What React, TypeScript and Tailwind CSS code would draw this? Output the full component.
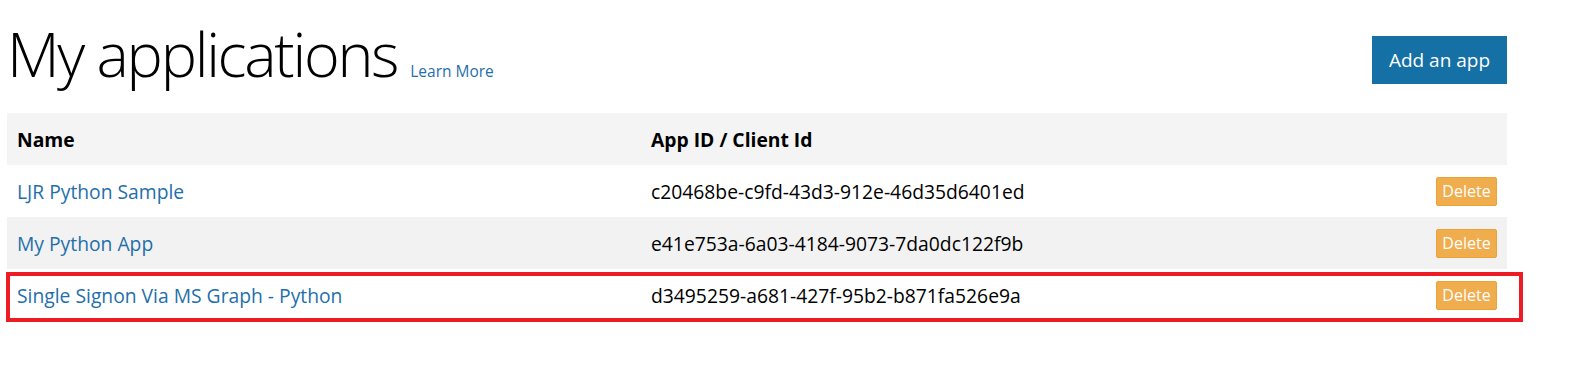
import React from 'react';

const apps = [
  { name: 'LJR Python Sample', id: 'c20468be-c9fd-43d3-912e-46d35d6401ed' },
  { name: 'My Python App', id: 'e41e753a-6a03-4184-9073-7da0dc122f9b' },
  { name: 'Single Signon Via MS Graph - Python', id: 'd3495259-a681-427f-95b2-b871fa526e9a' },
];

export default function App() {
  return (
    <div className="min-h-[374px] w-[1569px] bg-white pl-[7px] font-['Open_Sans',sans-serif] text-black">
      <div className="flex w-[1500px] items-start justify-between">
        <div className="flex items-baseline pt-[15px]">
          <h1 className="text-[61px] font-light leading-[78px] tracking-[-2.3px]">My applications</h1>
          <a href="#" className="ml-[13px] text-[15.5px] text-[#1f6fab]">Learn More</a>
        </div>
        <button className="mt-[36px] h-[48px] w-[135px] bg-[#1570a6] text-[19px] text-white">
          Add an app
        </button>
      </div>

      <table className="mt-[20px] w-[1500px] table-fixed border-collapse text-[19.3px]">
        <colgroup>
          <col className="w-[634px]" />
          <col />
          <col className="w-[120px]" />
        </colgroup>
        <thead>
          <tr className="h-[52px] bg-[#f4f4f4] text-left">
            <th className="pl-[10px] pt-[3px] font-bold">Name</th>
            <th className="pl-[10px] pt-[3px] font-bold">App ID / Client Id</th>
            <th></th>
          </tr>
        </thead>
        <tbody>
          {apps.map((app, i) => (
            <tr key={app.id} className={`h-[52px] ${i === 1 ? 'bg-[#f2f2f2]' : 'bg-white'} ${i === 2 ? 'relative' : ''}`}>
              <td className="pl-[10px] pt-[2px] text-[#1f6fab]">
                <a href="#">{app.name}</a>
              </td>
              <td className="pl-[10px] pt-[2px]">{app.id}</td>
              <td className="pr-[10px] text-right">
                <button className="h-[29px] w-[61px] rounded-[2px] border border-[#eea236] bg-[#f0ad4e] text-[16px] text-white">
                  Delete
                </button>
                {i === 2 && (
                  <div className="pointer-events-none absolute left-[-1px] top-[3px] h-[50px] w-[1517px] border-[4px] border-[#ed1c24]" />
                )}
              </td>
            </tr>
          ))}
        </tbody>
      </table>
    </div>
  );
}
